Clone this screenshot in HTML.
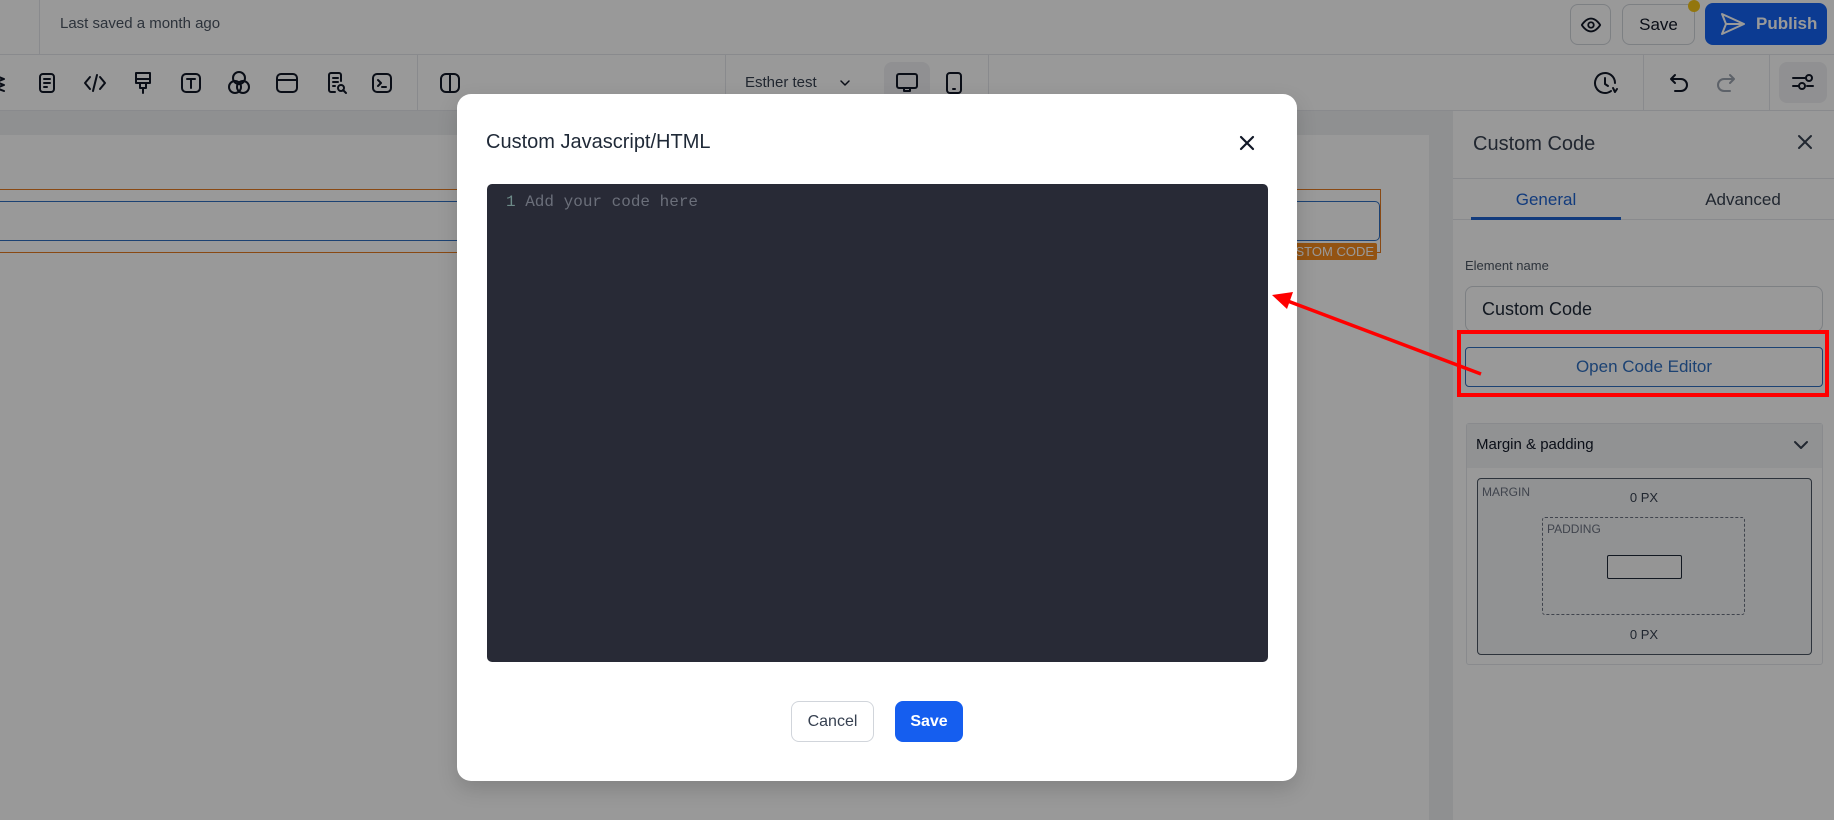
<!DOCTYPE html>
<html><head><meta charset="utf-8"><style>
*{box-sizing:border-box;margin:0;padding:0}
body{width:1834px;height:820px;overflow:hidden;position:relative;font-family:"Liberation Sans",sans-serif;background:#fff;color:#1f2937}
.a{position:absolute}
svg.i{position:absolute;fill:none;stroke:#111827;stroke-width:2;stroke-linecap:round;stroke-linejoin:round}
</style></head><body>
<!-- top bar -->
<div class="a" style="left:0;top:0;width:1834px;height:55px;background:#fff;border-bottom:1px solid #e5e7eb"></div>
<div class="a" style="left:39px;top:0;width:1px;height:55px;background:#e5e7eb"></div>
<div class="a" style="left:60px;top:15px;font-size:15px;color:#4b5563">Last saved a month ago</div>
<div class="a" style="left:1570px;top:4px;width:41px;height:41px;border:1px solid #d1d5db;border-radius:8px"></div>
<svg class="i" style="left:1580px;top:14px" width="22" height="22" viewBox="0 0 24 24"><path d="M2 12s4-7 10-7 10 7 10 7-4 7-10 7S2 12 2 12z"/><circle cx="12" cy="12" r="3"/></svg>
<div class="a" style="left:1622px;top:4px;width:73px;height:41px;border:1px solid #d1d5db;border-radius:8px;font-size:17px;line-height:39px;text-align:center;color:#111827">Save</div>
<div class="a" style="left:1688px;top:0;width:12px;height:12px;border-radius:50%;background:#f5c518"></div>
<div class="a" style="left:1705px;top:3px;width:122px;height:42px;background:#1463f3;border-radius:8px;color:#fff;font-size:17px;font-weight:bold;line-height:42px;padding-left:51px">Publish</div>
<svg class="i" style="left:1720px;top:12px;stroke:#fff" width="26" height="24" viewBox="0 0 26 24"><path d="M2 2l22 10L2 22l4-10z M6 12h18"/></svg>
<!-- toolbar -->
<div class="a" style="left:0;top:55px;width:1834px;height:56px;background:#fff;border-bottom:1px solid #e5e7eb"></div>
<svg class="i" style="left:-6px;top:72px" width="18" height="22" viewBox="0 0 18 22"><path d="M2 4l8 3-8 3 8 3-8 3 8 3"/></svg>
<svg class="i" style="left:36px;top:72px" width="22" height="22" viewBox="0 0 22 22"><rect x="4" y="2" width="14" height="18" rx="3"/><path d="M8 7h6M8 11h6M8 15h3"/></svg>
<svg class="i" style="left:83px;top:72px" width="24" height="22" viewBox="0 0 24 22"><path d="M7 5l-5 6 5 6M17 5l5 6-5 6M14 3l-4 16"/></svg>
<svg class="i" style="left:132px;top:70px" width="22" height="26" viewBox="0 0 22 26"><path d="M4 3h14v10H4zM4 9h14M8 13v5h6v-5M11 18v5"/></svg>
<svg class="i" style="left:180px;top:72px" width="22" height="22" viewBox="0 0 22 22"><rect x="2" y="2" width="18" height="18" rx="4"/><path d="M7 7h8M11 7v9"/></svg>
<svg class="i" style="left:227px;top:70px" width="24" height="26" viewBox="0 0 24 26"><circle cx="12" cy="8" r="6"/><circle cx="8" cy="17" r="6"/><circle cx="16" cy="17" r="6"/></svg>
<svg class="i" style="left:275px;top:72px" width="24" height="22" viewBox="0 0 24 22"><rect x="2" y="2" width="20" height="18" rx="4"/><path d="M2 8h20"/></svg>
<svg class="i" style="left:325px;top:71px" width="24" height="24" viewBox="0 0 24 24"><path d="M10 21H6a2 2 0 01-2-2V4a2 2 0 012-2h8a2 2 0 012 2v6M8 7h5M8 11h5M8 15h2"/><circle cx="16" cy="17" r="3"/><path d="M18 19l3 3"/></svg>
<svg class="i" style="left:371px;top:72px" width="22" height="22" viewBox="0 0 22 22"><rect x="2" y="2" width="18" height="18" rx="4"/><path d="M7 8l3 3-3 3M11 15h4"/></svg>
<div class="a" style="left:417px;top:55px;width:1px;height:56px;background:#e5e7eb"></div>
<svg class="i" style="left:439px;top:72px" width="22" height="22" viewBox="0 0 22 22"><rect x="2" y="2" width="18" height="18" rx="5"/><path d="M11 2v18"/></svg>
<div class="a" style="left:725px;top:55px;width:1px;height:56px;background:#e5e7eb"></div>
<div class="a" style="left:745px;top:74px;font-size:15px;color:#374151">Esther test</div>
<svg class="i" style="left:839px;top:78px;stroke-width:1.5" width="12" height="10" viewBox="0 0 12 10"><path d="M2 3l4 4 4-4"/></svg>
<div class="a" style="left:884px;top:62px;width:46px;height:41px;background:#f0f1f3;border-radius:8px"></div>
<svg class="i" style="left:895px;top:71px" width="24" height="24" viewBox="0 0 24 24"><rect x="2" y="3" width="20" height="14" rx="2"/><path d="M9 17v3h6v-3"/></svg>
<svg class="i" style="left:944px;top:71px" width="20" height="24" viewBox="0 0 20 24"><rect x="3" y="2" width="14" height="20" rx="3"/><path d="M9 18h2"/></svg>
<div class="a" style="left:988px;top:55px;width:1px;height:56px;background:#e5e7eb"></div>
<svg class="i" style="left:1593px;top:71px" width="26" height="26" viewBox="0 0 26 26"><path d="M22 12a10 10 0 10-4 8"/><path d="M12 7v6l3 2M20 17l2 4 2-3"/></svg>
<div class="a" style="left:1643px;top:55px;width:1px;height:56px;background:#e5e7eb"></div>
<svg class="i" style="left:1667px;top:71px" width="24" height="24" viewBox="0 0 24 24"><path d="M8 4L4 8l4 4M4 8h10a6 6 0 010 12H8"/></svg>
<svg class="i" style="left:1714px;top:71px;stroke:#9ca3af" width="24" height="24" viewBox="0 0 24 24"><path d="M16 4l4 4-4 4M20 8H10a6 6 0 000 12h6"/></svg>
<div class="a" style="left:1769px;top:55px;width:1px;height:56px;background:#e5e7eb"></div>
<div class="a" style="left:1779px;top:62px;width:48px;height:41px;background:#f0f1f3;border-radius:8px"></div>
<svg class="i" style="left:1790px;top:70px" width="26" height="24" viewBox="0 0 26 24"><path d="M3 8h12M3 16h6M17 16h6"/><circle cx="19" cy="8" r="3"/><circle cx="12" cy="16" r="3"/></svg>
<!-- canvas -->
<div class="a" style="left:0;top:111px;width:1453px;height:709px;background:#eff0f2"></div>
<div class="a" style="left:0;top:135px;width:1429px;height:685px;background:#fff"></div>
<div class="a" style="left:-5px;top:189px;width:1386px;height:64px;border:1.5px solid #e57a20"></div>
<div class="a" style="left:-5px;top:201px;width:1385px;height:40px;border:1.5px solid #2f6fc0;border-radius:5px"></div>
<div class="a" style="left:1270px;top:243px;width:107px;height:17px;background:#f58a1e;border-radius:2px;color:#fff;font-size:13px;line-height:17px;text-align:right;padding-right:3px;white-space:nowrap">CUSTOM CODE</div>
<!-- right panel -->
<div class="a" style="left:1453px;top:111px;width:381px;height:709px;background:#fff"></div>
<div class="a" style="left:1473px;top:133px;font-size:20px;color:#374151">Custom Code</div>
<svg class="i" style="left:1797px;top:134px;stroke:#374151" width="16" height="16" viewBox="0 0 16 16"><path d="M2 2l12 12M14 2L2 14"/></svg>
<div class="a" style="left:1453px;top:178px;width:381px;height:1px;background:#e5e7eb"></div>
<div class="a" style="left:1453px;top:219px;width:381px;height:1px;background:#e5e7eb"></div>
<div class="a" style="left:1471px;top:217px;width:150px;height:3px;background:#1e63d0"></div>
<div class="a" style="left:1471px;top:190px;width:150px;text-align:center;font-size:17px;color:#1e63d0">General</div>
<div class="a" style="left:1668px;top:190px;width:150px;text-align:center;font-size:17px;color:#374151">Advanced</div>
<div class="a" style="left:1465px;top:258px;font-size:13px;color:#4b5563">Element name</div>
<div class="a" style="left:1465px;top:286px;width:358px;height:46px;border:1px solid #d1d5db;border-radius:8px;font-size:18px;line-height:44px;padding-left:16px;color:#1f2937">Custom Code</div>
<div class="a" style="left:1465px;top:347px;width:358px;height:40px;border:1px solid #2f6fc0;border-radius:4px;font-size:17px;line-height:38px;text-align:center;color:#2f6fc0">Open Code Editor</div>
<div class="a" style="left:1466px;top:423px;width:357px;height:242px;border:1px solid #e5e7eb;border-radius:3px"></div>
<div class="a" style="left:1467px;top:424px;width:355px;height:44px;background:#f2f3f5"></div>
<div class="a" style="left:1476px;top:436px;font-size:15px;color:#111827">Margin &amp; padding</div>
<svg class="i" style="left:1793px;top:440px;stroke:#374151" width="16" height="10" viewBox="0 0 16 10"><path d="M2 2l6 6 6-6"/></svg>
<div class="a" style="left:1477px;top:478px;width:335px;height:177px;border:1px solid #4b5563;border-radius:4px;background:#f2f3f5"></div>
<div class="a" style="left:1482px;top:485px;font-size:12px;color:#6b7280">MARGIN</div>
<div class="a" style="left:1612px;top:490px;width:64px;text-align:center;font-size:13px;color:#374151">0 PX</div>
<div class="a" style="left:1542px;top:517px;width:203px;height:98px;border:1px dashed #6b7280;border-radius:3px"></div>
<div class="a" style="left:1547px;top:522px;font-size:12px;color:#6b7280">PADDING</div>
<div class="a" style="left:1607px;top:555px;width:75px;height:24px;border:1px solid #1f2937;border-radius:2px;background:#f8f8f8"></div>
<div class="a" style="left:1612px;top:627px;width:64px;text-align:center;font-size:13px;color:#374151">0 PX</div>
<!-- overlay -->
<div class="a" style="left:0;top:0;width:1834px;height:820px;background:rgba(0,0,0,0.4);z-index:50"></div>
<!-- modal -->
<div style="position:absolute;left:0;top:0;z-index:60">
<div class="a" style="left:457px;top:94px;width:840px;height:687px;background:#fff;border-radius:14px;box-shadow:0 8px 20px rgba(0,0,0,.15)"></div>
<div class="a" style="left:486px;top:131px;font-size:20px;color:#1f2937;white-space:nowrap">Custom Javascript/HTML</div>
<svg class="i" style="left:1239px;top:135px;stroke:#111827;stroke-width:2.2" width="16" height="16" viewBox="0 0 16 16"><path d="M2 2l12 12M14 2L2 14"/></svg>
<div class="a" style="left:487px;top:184px;width:781px;height:478px;background:#282a36;border-radius:5px"></div>
<div class="a" style="left:506px;top:192px;font-family:'Liberation Mono',monospace;font-size:16px;color:#6d8a88;line-height:20px;white-space:nowrap">1 <span style="color:#6b6f7a">Add your code here</span></div>
<div class="a" style="left:791px;top:701px;width:83px;height:41px;border:1px solid #d1d5db;border-radius:8px;font-size:16px;line-height:39px;text-align:center;color:#374151">Cancel</div>
<div class="a" style="left:895px;top:701px;width:68px;height:41px;background:#155eef;border-radius:8px;font-size:16px;font-weight:bold;line-height:41px;text-align:center;color:#fff">Save</div>
<div class="a" style="left:1457px;top:330px;width:372px;height:67px;border:4px solid #ff0000"></div>
<svg class="a" style="left:0;top:0" width="1834" height="820"><line x1="1481" y1="374" x2="1285" y2="300" stroke="#ff0000" stroke-width="3.5"/><polygon points="1272,295 1293,292 1287,309" fill="#ff0000"/></svg>
</div>
</body></html>
